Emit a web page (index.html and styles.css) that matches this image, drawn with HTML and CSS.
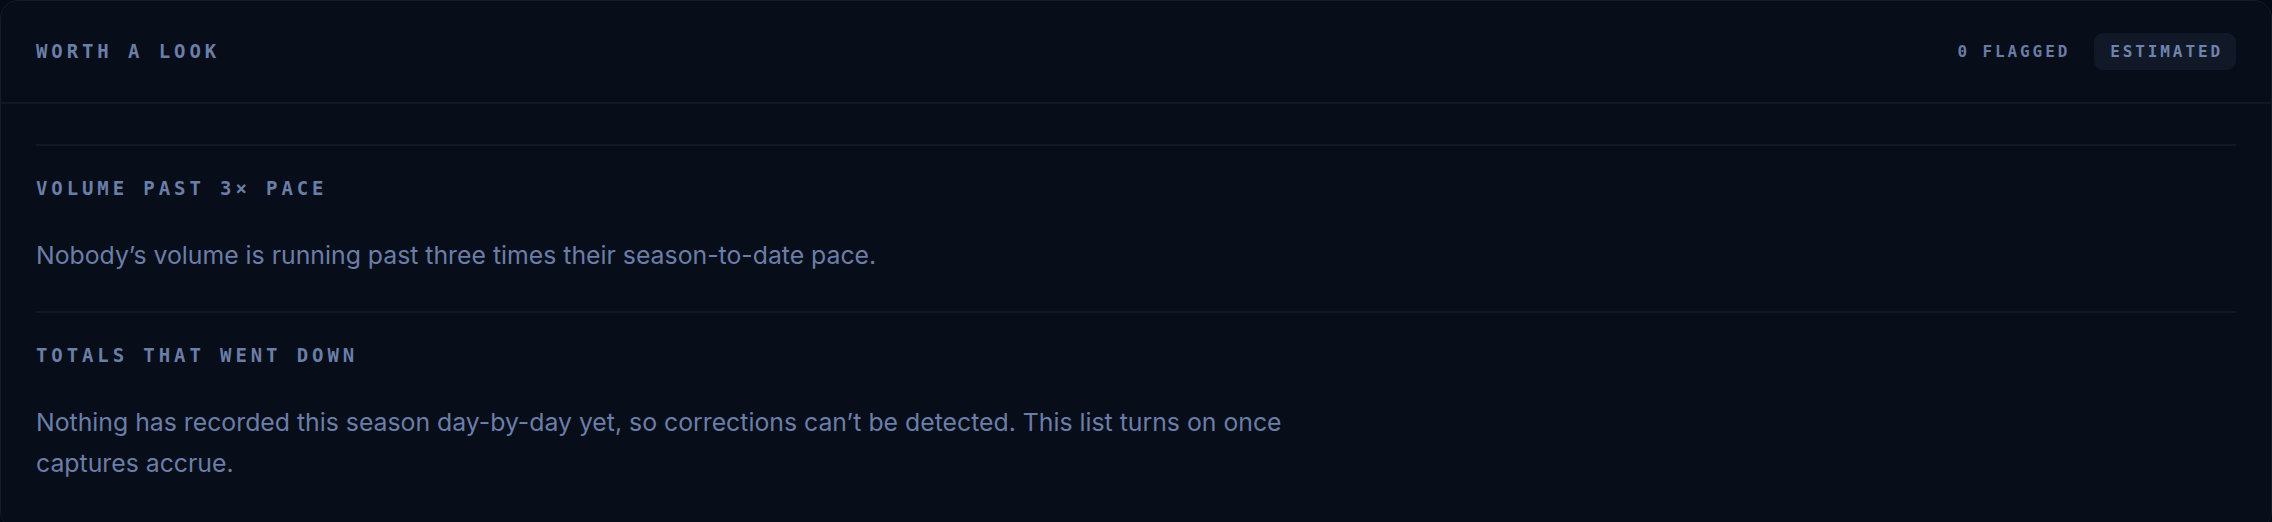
FILE: index.html
```html
<!DOCTYPE html>
<html lang="en">
<head>
<meta charset="utf-8">
<title>Worth a look</title>
<link rel="stylesheet" href="styles.css">
</head>
<body>
<section class="card">
  <header class="card-head">
    <h2 class="eyebrow">Worth a look</h2>
    <div class="head-meta">
      <span class="count">0 flagged</span>
      <span class="badge">Estimated</span>
    </div>
  </header>
  <div class="list">
    <article class="item">
      <h3 class="eyebrow">Volume past 3× pace</h3>
      <p class="note">Nobody’s volume is running past three times their season-to-date pace.</p>
    </article>
    <article class="item">
      <h3 class="eyebrow">Totals that went down</h3>
      <p class="note">Nothing has recorded this season day-by-day yet, so corrections can’t be detected. This list turns on once captures accrue.</p>
    </article>
  </div>
</section>
</body>
</html>
```

FILE: styles.css
```css
* { box-sizing: border-box; }
html, body { margin: 0; padding: 0; background: #050a13; }
body { width: 2272px; height: 522px; overflow: hidden; }

.card {
  background: #070d19;
  border: 1px solid #151c2a;
  border-radius: 18px;
  min-height: 530px;
}

.card-head {
  height: 103px;
  padding: 0 35px;
  display: flex;
  align-items: center;
  justify-content: space-between;
  border-bottom: 2px solid #111826;
}

.card-head .eyebrow {
  margin-top: -2px;
}

.eyebrow {
  margin: 0;
  font-family: "DejaVu Sans Mono", "Liberation Mono", monospace;
  font-weight: 700;
  font-size: 19px;
  line-height: 28px;
  letter-spacing: 3.9px;
  text-transform: uppercase;
  color: #6b7ea8;
}

.head-meta {
  display: flex;
  align-items: center;
  gap: 24px;
}

.count, .badge {
  font-family: "DejaVu Sans Mono", "Liberation Mono", monospace;
  font-weight: 700;
  font-size: 16px;
  letter-spacing: 2.9px;
  text-transform: uppercase;
  color: #6a7ca5;
}

.badge {
  background: #111928;
  border-radius: 9px;
  padding: 0 13px 0 16px;
  height: 37px;
  display: inline-flex;
  align-items: center;
  color: #7083ae;
}

.list {
  padding: 40px 35px 0;
}

.item {
  border-top: 2px solid #111826;
  padding: 28px 0 35px;
}

.note {
  margin: 33px 0 0;
  max-width: 1310px;
  font-family: "Inter", "Lato", sans-serif;
  font-size: 24.8px;
  line-height: 41px;
  color: #6a7ea8;
}
```
